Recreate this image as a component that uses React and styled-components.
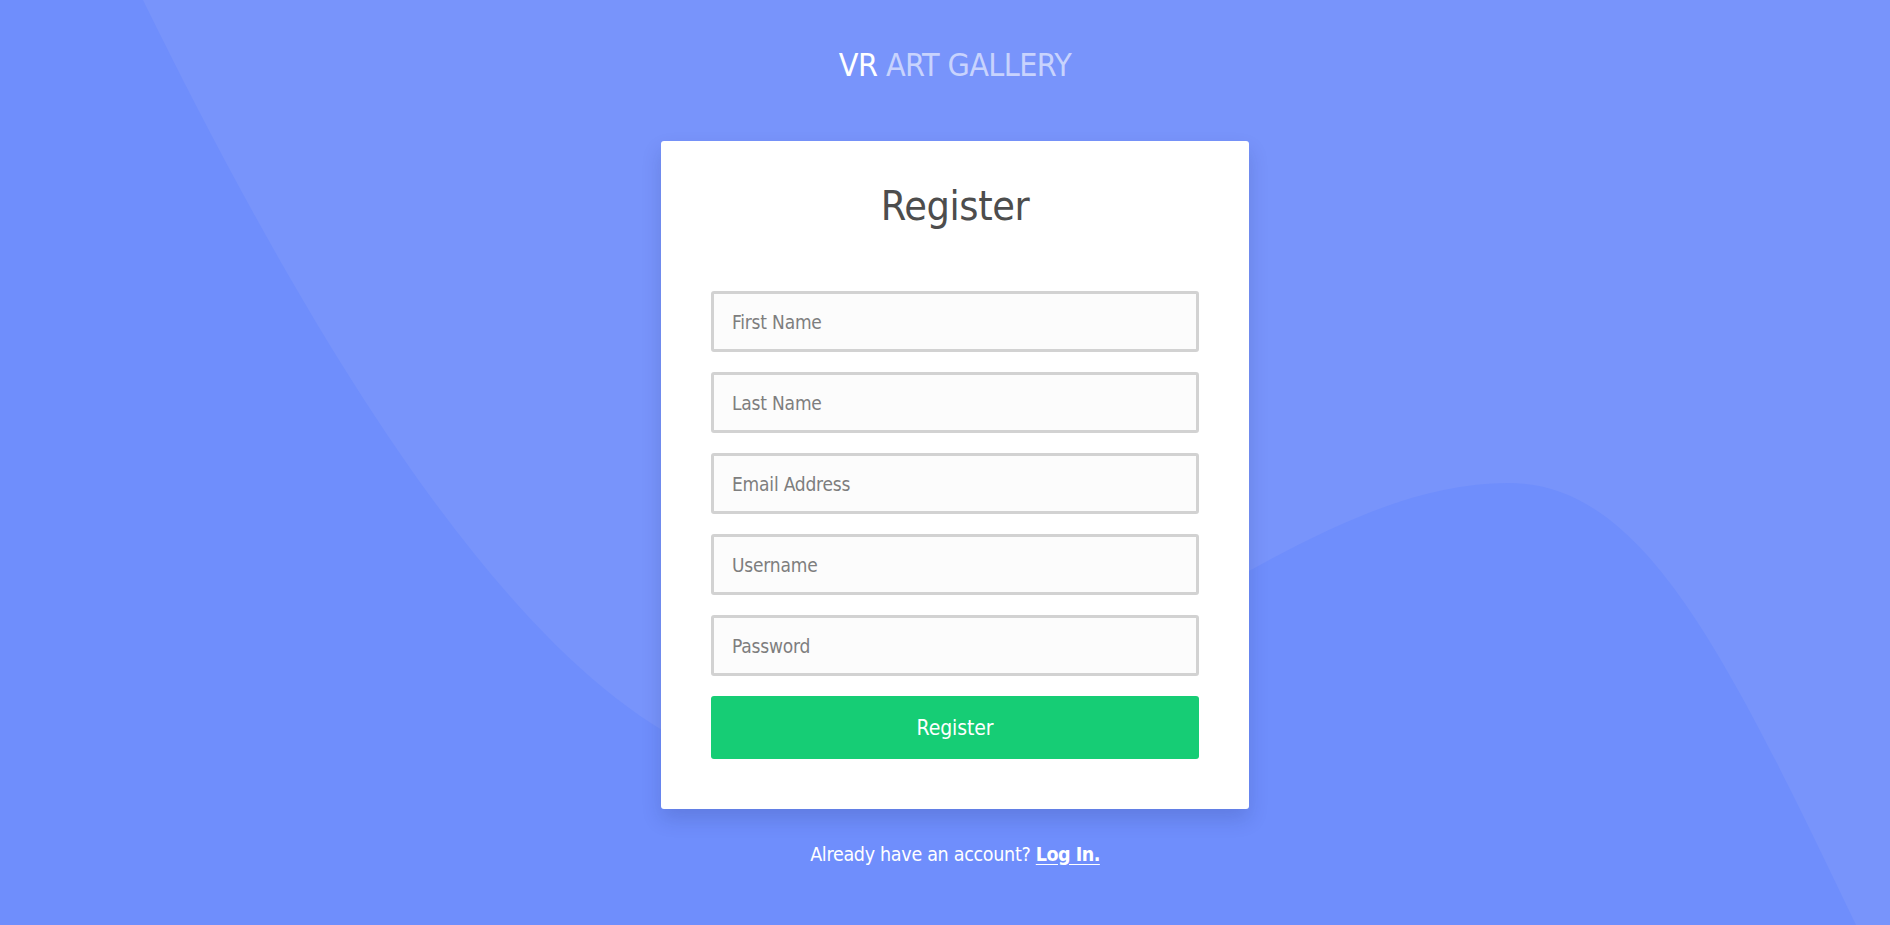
import React from "react";
import styled, { createGlobalStyle } from "styled-components";

const GlobalStyle = createGlobalStyle`
  html, body {
    margin: 0;
    padding: 0;
    height: 100%;
  }
  body {
    background: #7894fb;
    font-family: "DejaVu Sans Condensed", "DejaVu Sans", "Liberation Sans", sans-serif;
    -webkit-font-smoothing: antialiased;
  }
  * { box-sizing: border-box; }
`;

const Page = styled.main`
  position: relative;
  min-height: 100vh;
  overflow: hidden;
  background: #7894fb;
`;

const Backdrop = styled.svg`
  position: absolute;
  inset: 0;
  width: 100%;
  height: 100%;
  z-index: 0;
  pointer-events: none;
`;

const Content = styled.div`
  position: relative;
  z-index: 1;
  display: flex;
  flex-direction: column;
  align-items: center;
  padding: 45px 0 0 20px;
`;

const Brand = styled.h1`
  margin: 0 0 56px;
  font-size: 32px;
  line-height: 40px;
  font-weight: 400;
  letter-spacing: -0.6px;
  color: rgba(255, 255, 255, 0.6);
`;

const BrandStrong = styled.span`
  color: #ffffff;
`;

const Card = styled.section`
  width: 588px;
  padding: 38px 50px 50px;
  background: #ffffff;
  border-radius: 3px;
  box-shadow: 0 10px 20px rgba(20, 30, 90, 0.16);
  display: flex;
  flex-direction: column;
  align-items: stretch;
`;

const Heading = styled.h2`
  margin: 0 0 58px;
  text-align: center;
  font-size: 41px;
  line-height: 54px;
  font-weight: 400;
  letter-spacing: -0.4px;
  color: #4d4d4d;
`;

const Form = styled.form`
  display: flex;
  flex-direction: column;
  gap: 20px;
`;

const Field = styled.input`
  height: 61px;
  width: 100%;
  padding: 0 18px;
  border: 3px solid #d2d2d2;
  border-radius: 3px;
  background: #fcfcfc;
  font-family: inherit;
  font-size: 19px;
  letter-spacing: -0.2px;
  color: #555;
  outline: none;

  &::placeholder {
    color: #7e7e7e;
  }
`;

const Submit = styled.button`
  height: 63px;
  width: 100%;
  border: none;
  border-radius: 3px;
  background: #16cd75;
  color: #ffffff;
  font-family: inherit;
  font-size: 21px;
  letter-spacing: -0.1px;
  cursor: pointer;
`;

const Footer = styled.p`
  margin: 31px 0 0;
  font-size: 19.5px;
  line-height: 30px;
  letter-spacing: -0.3px;
  color: #ffffff;
`;

const FooterLink = styled.a`
  color: #ffffff;
  font-weight: 700;
  letter-spacing: -0.5px;
  text-decoration: underline;
  text-underline-offset: 3px;
`;

const fields = [
  { name: "firstName", placeholder: "First Name", type: "text" },
  { name: "lastName", placeholder: "Last Name", type: "text" },
  { name: "email", placeholder: "Email Address", type: "email" },
  { name: "username", placeholder: "Username", type: "text" },
  { name: "password", placeholder: "Password", type: "password" },
];

export default function App() {
  return (
    <>
      <GlobalStyle />
      <Page>
        <Backdrop viewBox="0 0 1890 925" preserveAspectRatio="none" aria-hidden="true">
          <path
            d="M143,0 C300,320 500,660 700,750 C850,820 1050,680 1249,571 C1350,515 1430,483 1508,483 C1640,483 1720,640 1856,925 L0,925 L0,0 Z"
            fill="#6f8efc"
          />
        </Backdrop>
        <Content>
          <Brand>
            <BrandStrong>VR</BrandStrong> ART GALLERY
          </Brand>
          <Card>
            <Heading>Register</Heading>
            <Form onSubmit={(e) => e.preventDefault()}>
              {fields.map((f) => (
                <Field key={f.name} name={f.name} type={f.type} placeholder={f.placeholder} />
              ))}
              <Submit type="submit">Register</Submit>
            </Form>
          </Card>
          <Footer>
            Already have an account? <FooterLink href="#">Log In.</FooterLink>
          </Footer>
        </Content>
      </Page>
    </>
  );
}
